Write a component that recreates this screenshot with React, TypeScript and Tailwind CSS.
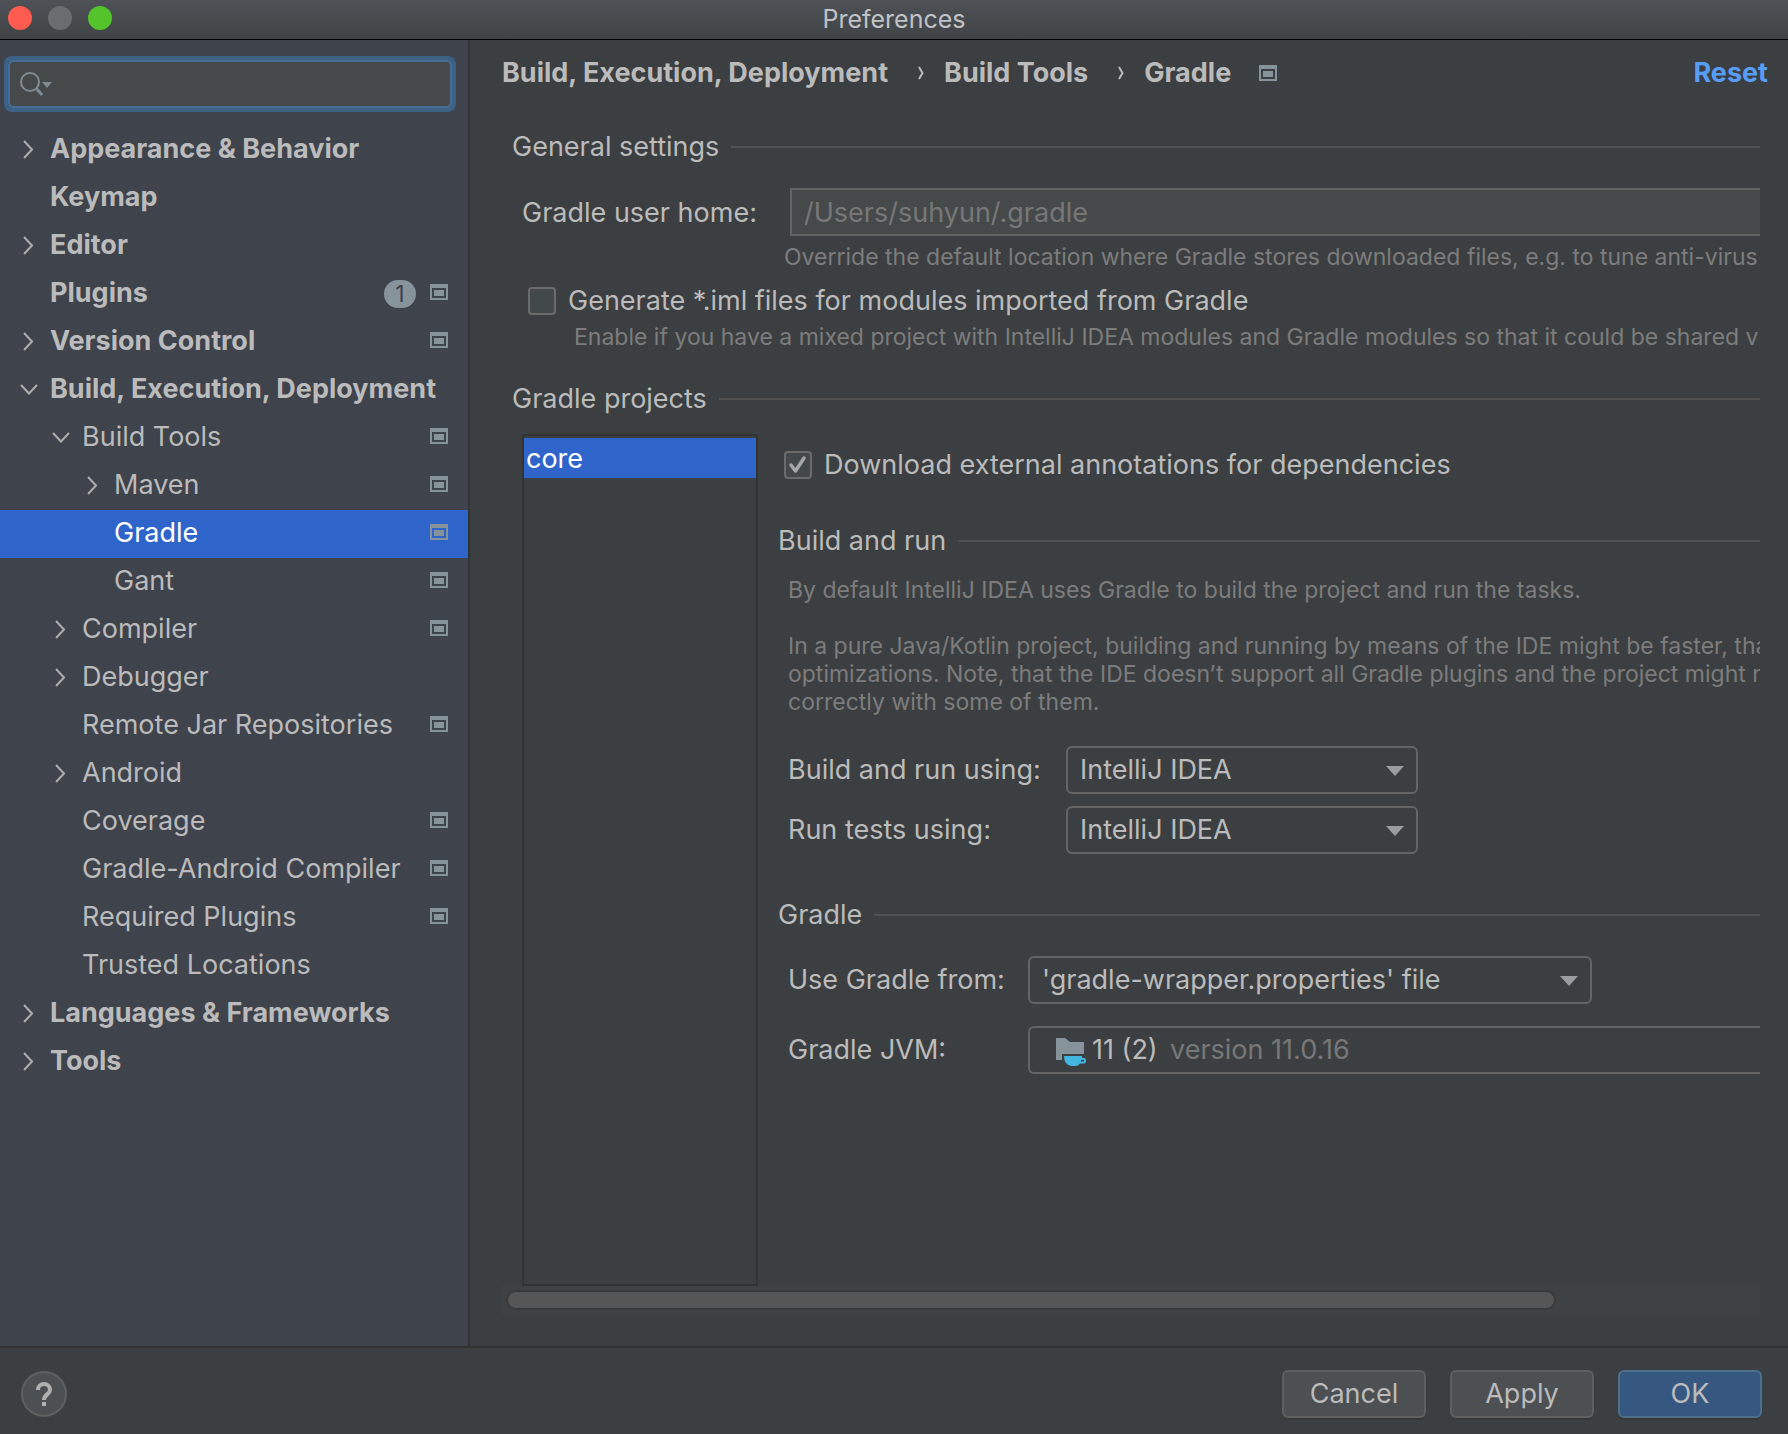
import { useState } from "react";
import type { ReactNode } from "react";
import clsx from "clsx";

type TreeNode = {
  label: string;
  level: 0 | 1 | 2;
  arrow?: "open" | "closed";
  project?: boolean;
  badge?: number;
};

const tree: TreeNode[] = [
  { label: "Appearance & Behavior", level: 0, arrow: "closed" },
  { label: "Keymap", level: 0 },
  { label: "Editor", level: 0, arrow: "closed" },
  { label: "Plugins", level: 0, project: true, badge: 1 },
  { label: "Version Control", level: 0, arrow: "closed", project: true },
  { label: "Build, Execution, Deployment", level: 0, arrow: "open" },
  { label: "Build Tools", level: 1, arrow: "open", project: true },
  { label: "Maven", level: 2, arrow: "closed", project: true },
  { label: "Gradle", level: 2, project: true },
  { label: "Gant", level: 2, project: true },
  { label: "Compiler", level: 1, arrow: "closed", project: true },
  { label: "Debugger", level: 1, arrow: "closed" },
  { label: "Remote Jar Repositories", level: 1, project: true },
  { label: "Android", level: 1, arrow: "closed" },
  { label: "Coverage", level: 1, project: true },
  { label: "Gradle-Android Compiler", level: 1, project: true },
  { label: "Required Plugins", level: 1, project: true },
  { label: "Trusted Locations", level: 1 },
  { label: "Languages & Frameworks", level: 0, arrow: "closed" },
  { label: "Tools", level: 0, arrow: "closed" },
];

const indent = ["pl-[18px]", "pl-[50px]", "pl-[82px]"];

function ProjectIcon({ className }: { className?: string }) {
  return (
    <svg width="18" height="16" viewBox="0 0 18 16" className={clsx("shrink-0", className)} aria-hidden="true">
      <path
        fill="#87939a"
        fillRule="evenodd"
        d="M0 0h18v16H0zM2 4v10h14V4zM4 6h10v6H4z"
      />
    </svg>
  );
}

function Arrow({ type }: { type?: "open" | "closed" }) {
  return (
    <svg
      width="22"
      height="22"
      viewBox="0 0 22 22"
      fill="none"
      stroke="#adadad"
      strokeWidth="2"
      className="shrink-0"
      aria-hidden="true"
    >
      {type === "closed" && <path d="M6 2l8 8.500-8 8.500" />}
      {type === "open" && <path d="M3 6l8 8.500 8-8.500" />}
    </svg>
  );
}

function Sidebar() {
  const [selected, setSelected] = useState("Gradle");

  return (
    <aside className="w-[470px] shrink-0 border-r-2 border-[#323536] bg-[#3f434c]">
      <div className="px-1 pt-4">
        <div className="mr-2 rounded-lg bg-[#3d6185] p-1">
          <div className="flex h-12 items-center rounded-md border-2 border-[#466d94] bg-[#45494a] pl-[9px]">
            <svg width="34" height="26" viewBox="0 0 34 26" className="shrink-0" aria-hidden="true">
              <circle cx="11" cy="11" r="9" fill="none" stroke="#7f8b91" strokeWidth="2" />
              <path d="M17 17l6 7" stroke="#7f8b91" strokeWidth="3" />
              <path d="M23 11h10l-5 6z" fill="#7f8b91" />
            </svg>
            <input
              type="text"
              aria-label="Search settings"
              className="min-w-0 flex-1 bg-transparent px-1 outline-none"
            />
          </div>
        </div>
      </div>

      <nav className="mt-[14px]">
        {tree.map((node) => (
          <button
            key={node.label}
            onClick={() => setSelected(node.label)}
            className={clsx(
              "flex h-12 w-full items-center pr-5 text-left whitespace-nowrap",
              indent[node.level],
              node.level === 0 && "font-bold",
              node.label === selected && "bg-[#2f65ca] text-white"
            )}
          >
            <Arrow type={node.arrow} />
            <span className="ml-[10px] flex-1 pb-[2px]">{node.label}</span>
            {node.badge && (
              <span className="mr-[14px] flex h-7 w-8 items-center justify-center rounded-full bg-[#87939a] text-[23px] font-normal text-[#3f434c]">
                {node.badge}
              </span>
            )}
            {node.project && <ProjectIcon className="mb-1" />}
          </button>
        ))}
      </nav>
    </aside>
  );
}

function SectionTitle({ children }: { children: ReactNode }) {
  return (
    <div className="flex h-[30px] items-center gap-3">
      <h2>{children}</h2>
      <div className="h-[2px] flex-1 bg-[#515151]" />
    </div>
  );
}

function Hint({ children }: { children: ReactNode }) {
  return <p className="text-[23px] leading-7 text-[#7c7c7c]">{children}</p>;
}

function Checkbox({ id, label, defaultChecked }: { id: string; label: string; defaultChecked?: boolean }) {
  return (
    <div className="flex h-[30px] items-center gap-3">
      <span className="relative flex">
        <input
          id={id}
          type="checkbox"
          defaultChecked={defaultChecked}
          className="peer size-7 appearance-none rounded border-2 border-[#6b6b6b] bg-[#43494a]"
        />
        <svg
          viewBox="0 0 28 28"
          fill="none"
          stroke="#a7a7a7"
          strokeWidth="3.5"
          strokeLinecap="round"
          strokeLinejoin="round"
          className="pointer-events-none absolute inset-0 hidden peer-checked:block"
          aria-hidden="true"
        >
          <path d="M7 14l4.500 6L20 7" />
        </svg>
      </span>
      <label htmlFor={id}>{label}</label>
    </div>
  );
}

function Select({ id, options, className }: { id: string; options: string[]; className: string }) {
  return (
    <div className={clsx("relative", className)}>
      <select
        id={id}
        className="h-12 w-full appearance-none rounded-md border-2 border-[#646464] bg-[#3c3f41] px-3 outline-none"
      >
        {options.map((option) => (
          <option key={option}>{option}</option>
        ))}
      </select>
      <svg
        width="18"
        height="10"
        viewBox="0 0 18 10"
        className="pointer-events-none absolute top-5 right-[14px]"
        aria-hidden="true"
      >
        <path d="M0 0h18l-9 10z" fill="#9a9da0" />
      </svg>
    </div>
  );
}

function JdkIcon() {
  return (
    <svg width="32" height="32" viewBox="0 0 32 32" className="shrink-0" aria-hidden="true">
      <path d="M0 4h9l5 4h14v12H6v6H0z" fill="#87939a" />
      <path
        d="M8 22h18v2h2q2 0 2 2v1.500q0 2-2 2h-4q-2 2.500-4.500 2.500h-4Q8 31 8 22zM25 26v1.500h3V26z"
        fill="#40b6e0"
        fillRule="evenodd"
      />
    </svg>
  );
}

function Separator() {
  return (
    <svg width="6" height="16" viewBox="0 0 6 16" className="mr-5 ml-[30px] shrink-0" aria-hidden="true">
      <path d="M1 2l3.500 6L1 14" fill="none" stroke="#bbbbbb" strokeWidth="2" />
    </svg>
  );
}

function GradleSettings() {
  return (
    <section className="flex min-w-0 flex-1 flex-col pb-8">
      <header className="flex h-[66px] items-center pr-5 pl-8 font-bold whitespace-nowrap">
        <span>Build, Execution, Deployment</span>
        <Separator />
        <span>Build Tools</span>
        <Separator />
        <span className="mr-7">Gradle</span>
        <ProjectIcon />
        <button className="ml-auto text-[#589df6]">Reset</button>
      </header>

      <div className="mr-7 ml-8 flex flex-1 flex-col overflow-hidden pt-[26px] pl-[10px] whitespace-nowrap">
        <SectionTitle>General settings</SectionTitle>
        <div className="mt-[26px] flex pl-[10px]">
          <label htmlFor="home" className="w-[268px] shrink-0 leading-[50px]">
            Gradle user home:
          </label>
          <input
            id="home"
            type="text"
            placeholder="/Users/suhyun/.gradle"
            className="h-12 min-w-0 flex-1 border-y-2 border-l-2 border-[#646464] bg-[#45494a] px-3 outline-none placeholder:text-[#777777]"
          />
        </div>
        <div className="mt-[5px] pl-[272px]">
          <Hint>
            Override the default location where Gradle stores downloaded files, e.g. to tune anti-virus software
          </Hint>
        </div>
        <div className="mt-[15px] pl-4">
          <Checkbox id="iml" label="Generate *.iml files for modules imported from Gradle" />
        </div>
        <div className="mt-[7px] mb-[33px] pl-[62px]">
          <Hint>
            Enable if you have a mixed project with IntelliJ IDEA modules and Gradle modules so that it could be shared via VCS
          </Hint>
        </div>

        <SectionTitle>Gradle projects</SectionTitle>
        <div className="mt-5 flex flex-1 pl-[10px]">
          <ul className="w-[236px] shrink-0 border-2 border-[#323232] pt-[2px]">
            <li className="h-10 bg-[#2f65ca] px-[2px] leading-[42px] text-white">core</li>
          </ul>

          <div className="min-w-0 flex-1 pt-4 pl-5">
            <div className="mb-[46px] pl-[6px]">
              <Checkbox id="annotations" label="Download external annotations for dependencies" defaultChecked />
            </div>

            <SectionTitle>Build and run</SectionTitle>
            <div className="mt-5 mb-[46px] pl-[10px]">
              <Hint>By default IntelliJ IDEA uses Gradle to build the project and run the tasks.</Hint>
              <div className="mt-7 mb-[30px]">
                <Hint>
                  In a pure Java/Kotlin project, building and running by means of the IDE might be faster, thanks to
                  <br />
                  optimizations. Note, that the IDE doesn’t support all Gradle plugins and the project might not be built
                  <br />
                  correctly with some of them.
                </Hint>
              </div>
              <div className="grid grid-cols-[278px_352px] items-center gap-y-3">
                <label htmlFor="build">Build and run using:</label>
                <Select id="build" options={["IntelliJ IDEA", "Gradle"]} className="w-full" />
                <label htmlFor="tests">Run tests using:</label>
                <Select id="tests" options={["IntelliJ IDEA", "Gradle"]} className="w-full" />
              </div>
            </div>

            <SectionTitle>Gradle</SectionTitle>
            <div className="mt-[26px] grid grid-cols-[240px_1fr] items-center gap-y-[22px] pl-[10px]">
              <label htmlFor="distribution">Use Gradle from:</label>
              <Select
                id="distribution"
                options={["'gradle-wrapper.properties' file", "Specified location"]}
                className="w-[564px]"
              />
              <label htmlFor="jvm">Gradle JVM:</label>
              <div className="flex h-12 items-center rounded-l-md border-y-2 border-l-2 border-[#646464] pl-[26px]">
                <JdkIcon />
                <select id="jvm" className="ml-1 appearance-none bg-[#3c3f41] outline-none">
                  <option>11 (2)</option>
                </select>
                <span className="ml-3 text-[#777777]">version 11.0.16</span>
              </div>
            </div>
          </div>
        </div>
      </div>

      <div className="mr-7 ml-8 bg-[#3f4244] p-1">
        <div className="h-5 w-[84%] rounded-full border-2 border-[#383a3b] bg-[#565657]" />
      </div>
    </section>
  );
}

export default function App() {
  return (
    <div className="flex min-h-screen flex-col bg-[#3c3f41] font-['Inter',sans-serif] text-[27px] leading-[30px] text-[#bbbbbb]">
      <div className="grid h-10 grid-cols-[1fr_auto_1fr] items-center border-b border-black bg-linear-to-b from-[#4e5155] to-[#404346] px-2 pb-[3px]">
        <div className="flex gap-4">
          <button aria-label="Close" className="size-6 rounded-full bg-[#ff5b51]" />
          <button aria-label="Minimize" className="size-6 rounded-full bg-[#6a6d70]" />
          <button aria-label="Zoom" className="size-6 rounded-full bg-[#54c32c]" />
        </div>
        <h1 className="pt-[2px] text-[25px] text-[#c0c2c6]">Preferences</h1>
      </div>

      <div className="flex flex-1">
        <Sidebar />
        <GradleSettings />
      </div>

      <footer className="flex h-[88px] items-center gap-6 border-t-2 border-[#323232] pt-[6px] pr-[26px] pl-[21px]">
        <button
          aria-label="Help"
          className="mr-auto flex size-[46px] items-center justify-center rounded-full border-2 border-[#5e6060] bg-[#4c5052]"
        >
          <svg width="18" height="24" viewBox="0 0 18 24" fill="none" aria-hidden="true">
            <path d="M3 8c0-8 12-8 12 0 0 4-6 4.500-6 10" stroke="#b0b0b0" strokeWidth="4" />
            <path d="M7 20h4v4H7z" fill="#b0b0b0" />
          </svg>
        </button>
        <button className="h-12 w-36 rounded-md border-2 border-[#5e6060] bg-[#4c5052] shadow-[0_2px_0_#363839]">
          Cancel
        </button>
        <button className="h-12 w-36 rounded-md border-2 border-[#5e6060] bg-[#4c5052] shadow-[0_2px_0_#363839]">
          Apply
        </button>
        <button className="h-12 w-36 rounded-md border-2 border-[#4c708c] bg-[#365880] shadow-[0_2px_0_#363839]">
          OK
        </button>
      </footer>
    </div>
  );
}
